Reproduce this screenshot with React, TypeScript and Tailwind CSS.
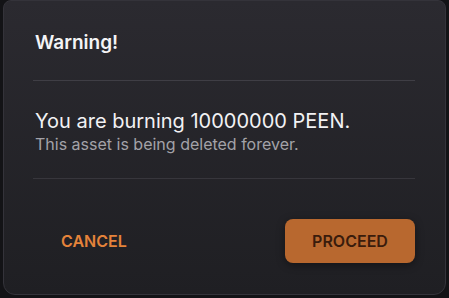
export default function App() {
  return (
    <div className="w-[449px] h-[298px] bg-[#131316] flex justify-center" style={{ fontFamily: "Inter, 'Noto Sans', sans-serif" }}>
      <div className="w-[443px] h-[295px] rounded-b-xl rounded-t-lg bg-gradient-to-b from-[#2b2a30] to-[#1f1f23] border border-[#34333a] pl-[29px] pr-[30px] flex flex-col">
        <h2 className="text-[19px] font-semibold text-[#f4f4f6] pt-[30px] leading-[24px] pl-[2px]">Warning!</h2>
        <div className="h-px bg-[#3f3e45] mt-[25px]" />
        <div className="pt-[27px] pl-[2px]">
          <p className="text-[20px] leading-[26px] text-[#f2f2f4]">You are burning 10000000 PEEN.</p>
          <p className="text-[16px] leading-[20px] text-[#a3a2a8]">This asset is being deleted forever.</p>
        </div>
        <div className="h-px bg-[#37363c] mt-[24px]" />
        <div className="flex items-center justify-between mt-[40px]">
          <button className="ml-[28px] text-[16px] font-semibold text-[#e5833a]">CANCEL</button>
          <button className="w-[130px] h-[44px] rounded-lg bg-[#b8682f] text-[16px] font-semibold text-[#3a1c0c] shadow-[0_2px_8px_rgba(0,0,0,0.4)]">PROCEED</button>
        </div>
      </div>
    </div>
  );
}
